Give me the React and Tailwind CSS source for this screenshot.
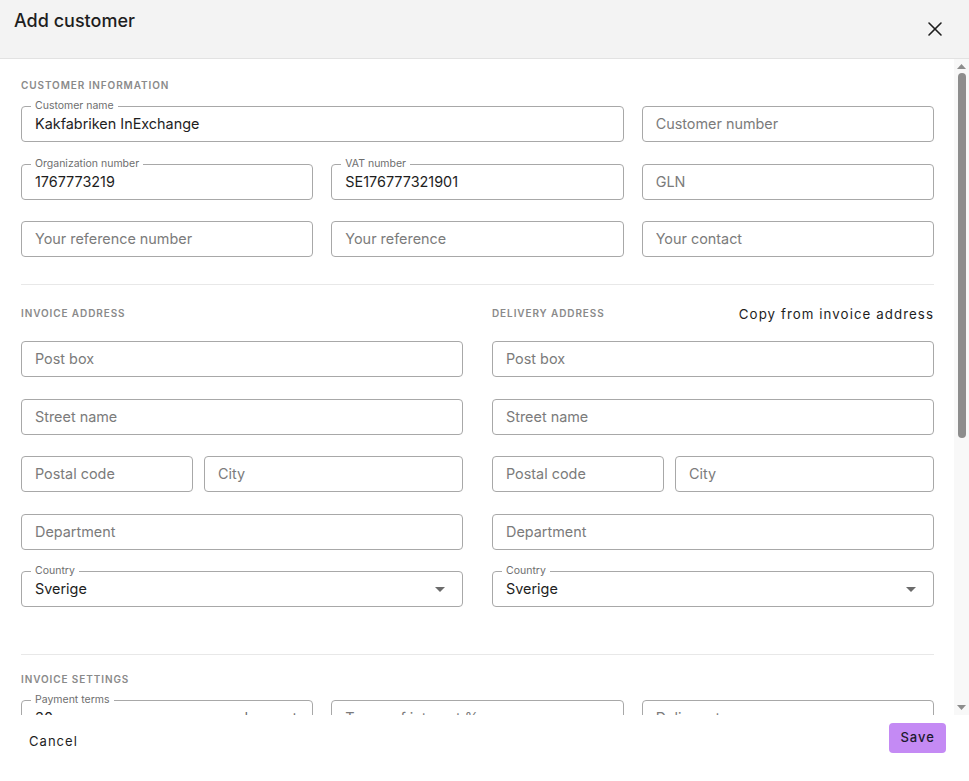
import { X } from "lucide-react";

function SectionTitle({ children }) {
  return (
    <div className="text-[10px] leading-3 font-semibold tracking-[0.09em] text-[#8a8a8a] uppercase">
      {children}
    </div>
  );
}

function Field({ label, value, placeholder, suffix, select, className = "" }) {
  return (
    <div
      className={`relative h-9 rounded-[4px] border border-[#a8a8a8] bg-white ${className}`}
    >
      {label && (
        <span className="absolute -top-[7px] left-[9px] bg-white px-[4px] text-[10.5px] leading-3 text-[#6e6e6e]">
          {label}
        </span>
      )}
      <div className="flex h-full items-center pl-[13px] pr-[15px] text-[14.4px]">
        {value ? (
          <span className="flex-1 truncate text-[#1e1e1e]">{value}</span>
        ) : (
          <span className="flex-1 truncate text-[#7b7b7b]">{placeholder}</span>
        )}
        {suffix && <span className="text-[#6e6e6e]">{suffix}</span>}
        {select && (
          <svg width="10" height="5" viewBox="0 0 10 5" className="mr-[2px]">
            <path d="M0 0h10L5 5z" fill="#6b6b6b" />
          </svg>
        )}
      </div>
    </div>
  );
}

function AddressColumn({ title, action }) {
  return (
    <div>
      <div className="flex h-[26px] items-center justify-between">
        <SectionTitle>{title}</SectionTitle>
        {action && (
          <button className="mt-[3px] text-[13.3px] tracking-[0.08em] text-[#1e1e1e]">
            {action}
          </button>
        )}
      </div>
      <div className="mt-[15px] flex flex-col gap-[21.5px]">
        <Field placeholder="Post box" />
        <Field placeholder="Street name" />
        <div className="grid grid-cols-[172px_1fr] gap-[11px]">
          <Field placeholder="Postal code" />
          <Field placeholder="City" />
        </div>
        <Field placeholder="Department" />
        <Field label="Country" value="Sverige" select />
      </div>
    </div>
  );
}

// classic scrollbar look, drawn by hand since the browser hides its own
function ScrollBar() {
  return (
    <div className="flex w-[15px] shrink-0 flex-col items-center bg-[#f8f8f8]">
      <svg width="9" height="5" viewBox="0 0 9 5" className="mt-[5px]">
        <path d="M0 5h9L4.5 0z" fill="#8d8d8d" />
      </svg>
      <div className="mt-[4px] h-[365px] w-[8px] rounded-full bg-[#8d8d8d]" />
      <div className="flex-1" />
      <svg width="9" height="5" viewBox="0 0 9 5" className="mb-[5px]">
        <path d="M0 0h9L4.5 5z" fill="#8d8d8d" />
      </svg>
    </div>
  );
}

export default function App() {
  return (
    <div className="flex h-screen flex-col bg-white font-['Inter',sans-serif]">
      <header className="flex h-[59px] shrink-0 items-start justify-between border-b border-[#e2e2e2] bg-[#f3f3f3] pl-[14px] pr-[22px]">
        <h1 className="mt-[10px] text-[18px] font-medium leading-[22px] text-[#1e1e1e]">
          Add customer
        </h1>
        <button className="mt-[17px] text-[#1e1e1e]">
          <X size={24} strokeWidth={1.6} />
        </button>
      </header>

      <div className="flex min-h-0 flex-1">
        <div className="min-w-0 flex-1 overflow-hidden">
          <div className="pb-10 pl-[21px] pr-5 pt-5">
            <SectionTitle>Customer information</SectionTitle>
            <div className="mt-[15px] grid grid-cols-3 gap-x-[18px] gap-y-[21.5px]">
              <Field
                className="col-span-2"
                label="Customer name"
                value="Kakfabriken InExchange"
              />
              <Field placeholder="Customer number" />
              <Field label="Organization number" value="1767773219" />
              <Field label="VAT number" value="SE176777321901" />
              <Field placeholder="GLN" />
              <Field placeholder="Your reference number" />
              <Field placeholder="Your reference" />
              <Field placeholder="Your contact" />
            </div>

            <hr className="mt-[27px] border-[#e8e8e8]" />

            <div className="mt-[15px] grid grid-cols-2 gap-x-[29px]">
              <AddressColumn title="Invoice address" />
              <AddressColumn
                title="Delivery address"
                action="Copy from invoice address"
              />
            </div>

            <hr className="mt-[47px] border-[#e8e8e8]" />

            <div className="mt-[18px]">
              <SectionTitle>Invoice settings</SectionTitle>
            </div>
            <div className="mt-[15px] grid grid-cols-3 gap-x-[18px] gap-y-[21.5px]">
              <Field label="Payment terms" value="30" suffix="days net" />
              <Field placeholder="Terms of interest %" />
              <Field placeholder="Delivery terms" />
              <Field placeholder="Delivery method" />
              <Field placeholder="Currency" />
              <Field placeholder="Language" />
            </div>
          </div>
        </div>
        <ScrollBar />
      </div>

      <footer className="flex h-[66px] shrink-0 items-start justify-between pl-[21px] pr-[23px]">
        <button className="mt-3 h-[30px] px-2 text-[13px] tracking-[0.08em] text-[#1e1e1e]">
          Cancel
        </button>
        <button className="mt-2 h-[30px] rounded-[4px] bg-[#c48af4] px-[11px] text-[13px] font-medium tracking-[0.08em] text-[#1c1a2e]">
          Save
        </button>
      </footer>
    </div>
  );
}
